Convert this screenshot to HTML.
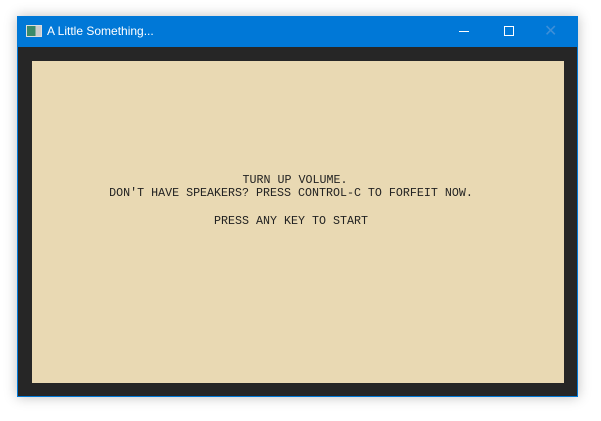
<!DOCTYPE html>
<html><head><style>
body{margin:0;width:601px;height:421px;background:#fff;position:relative;overflow:hidden;font-family:"Liberation Sans",sans-serif}
.win{position:absolute;left:17px;top:16px;width:561px;height:381px;background:#0078d7;box-shadow:0 0 12px rgba(0,0,0,0.25)}
.tb{position:absolute;left:0;top:0;width:561px;height:31px;color:#fff;font-size:12px}
.content{position:absolute;left:1px;top:31px;width:559px;height:349px;background:#262626}
.beige{position:absolute;left:14px;top:14px;width:532px;height:322px;background:#e9d9b3}
.l{position:absolute;left:0;width:518px;text-align:center;font-family:"Liberation Mono",monospace;font-size:11.67px;color:#222;white-space:pre;line-height:14px}
</style></head><body>
<div class="win">
 <div class="tb">
  <div style="position:absolute;left:9px;top:9px;width:14px;height:10px;border:1px solid #ddd;background:linear-gradient(90deg,#3a8a6a 0 60%,#ccc 60%)"></div>
  <div style="position:absolute;left:30px;top:8px">A Little Something...</div>
  <div style="position:absolute;left:442px;top:15px;width:10px;height:1px;background:#fff"></div>
  <div style="position:absolute;left:487px;top:10px;width:8px;height:8px;border:1px solid #fff"></div>
  <div style="position:absolute;left:527px;top:5px;color:#3d8fd8;font-size:16px">✕</div>
 </div>
 <div class="content"><div class="beige">
  <div class="l" style="top:112px;left:4px">TURN UP VOLUME.</div>
  <div class="l" style="top:125px">DON'T HAVE SPEAKERS? PRESS CONTROL-C TO FORFEIT NOW.</div>
  <div class="l" style="top:153px">PRESS ANY KEY TO START</div>
 </div></div>
</div>
</body></html>
